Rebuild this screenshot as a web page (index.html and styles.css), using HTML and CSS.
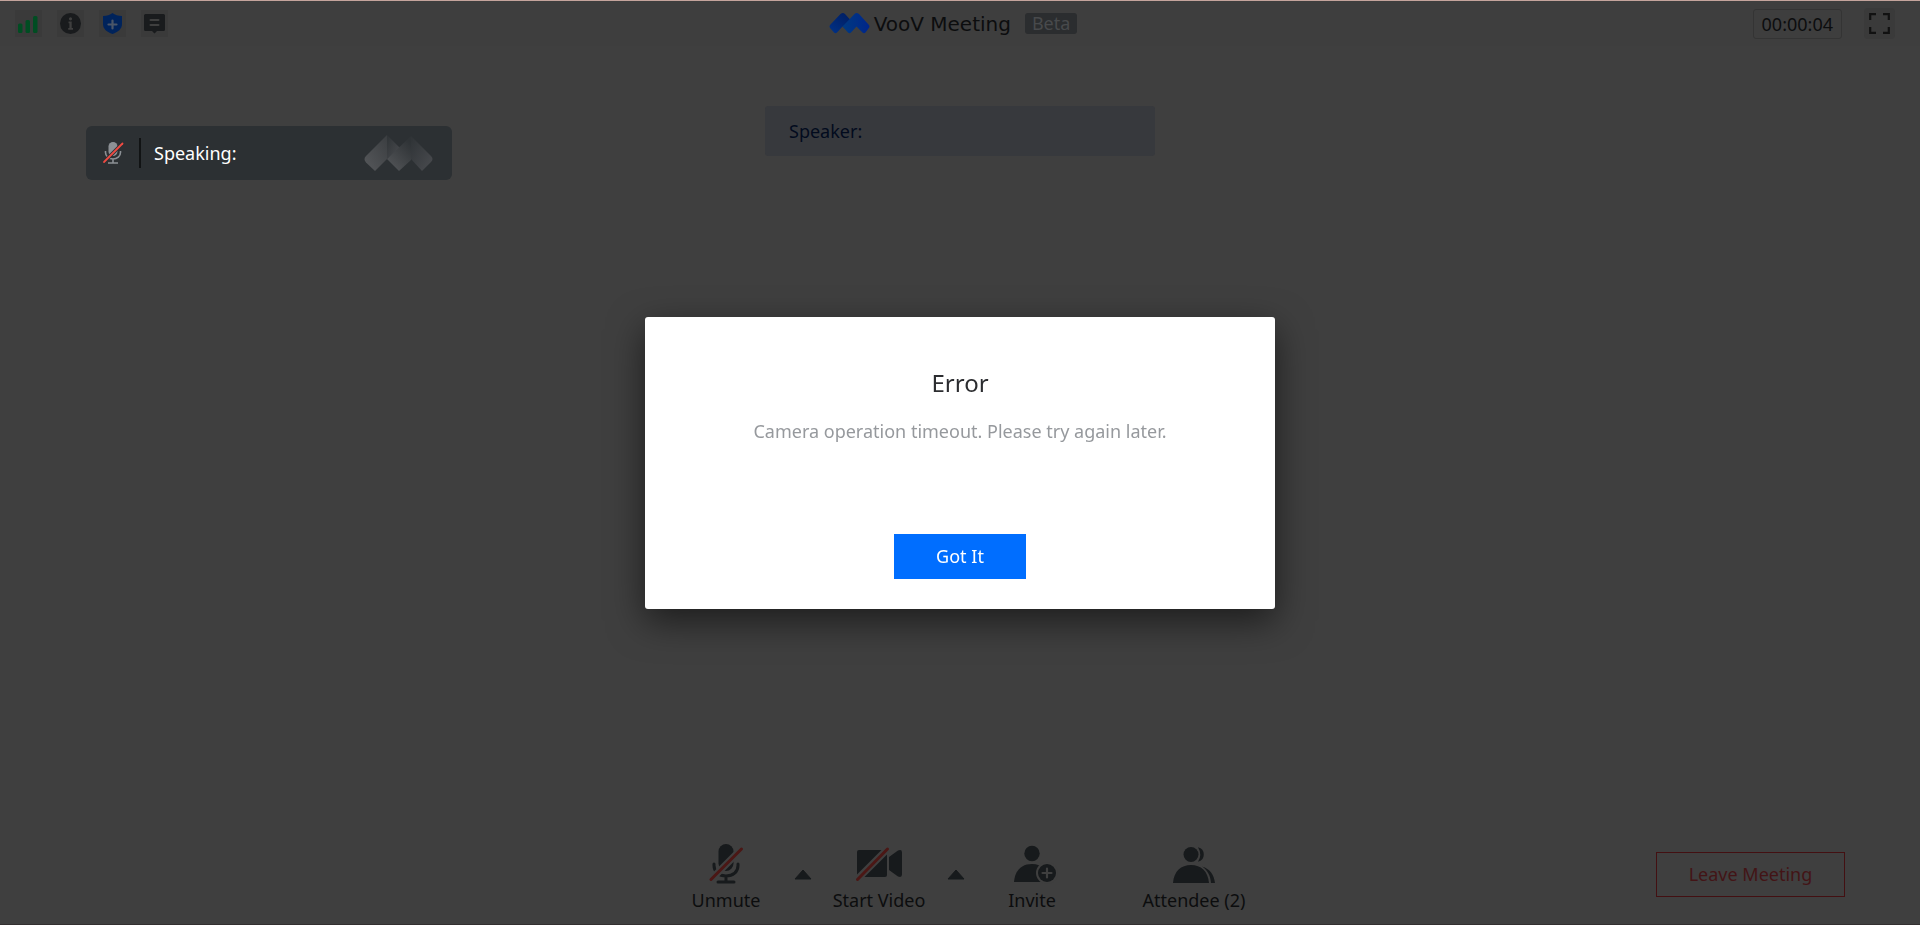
FILE: index.html
```html
<!DOCTYPE html>
<html lang="en">
<head>
<meta charset="utf-8">
<title>VooV Meeting</title>
<link rel="stylesheet" href="styles.css">
</head>
<body>
<div class="app">
  <header class="topbar">
    <div class="tools">
      <button class="tool" aria-label="Network"><svg width="27" height="27" viewBox="0 0 27 27" fill="#004d22"><rect x="3" y="13.500" width="4.500" height="9.500" rx="1.500"/><rect x="10.500" y="10" width="4.500" height="13" rx="1.500"/><rect x="18" y="6" width="4.500" height="17" rx="1.500"/></svg></button>
      <button class="tool" aria-label="Meeting info"><svg width="27" height="27" viewBox="0 0 27 27"><circle cx="13.500" cy="13.500" r="10.500" fill="#191b1d"/><g fill="#3f3f3f"><circle cx="13.500" cy="8.800" r="1.600"/><path d="M11.500 11.500h3.200v6.500h1.300v1.800h-4.800v-1.800h1.200v-4.700h-.9z"/></g></svg></button>
      <button class="tool" aria-label="Security"><svg width="27" height="27" viewBox="0 0 27 27"><path d="M13.500 3 C16 5 19 6 23 6 V14 C23 19 19 22 13.500 24 C8 22 4 19 4 14 V6 C8 6 11 5 13.500 3z" fill="#00235b"/><path d="M13.500 10.500v8M9.500 14.500h8" stroke="#4a5668" stroke-width="2.200" stroke-linecap="round"/></svg></button>
      <button class="tool" aria-label="Chat"><svg width="27" height="27" viewBox="0 0 27 27"><path d="M4.500 4h18a1.500 1.500 0 0 1 1.500 1.500v14a1.500 1.500 0 0 1-1.500 1.500h-6.500l-2.500 2.500-2.500-2.500h-6.500a1.500 1.500 0 0 1-1.500-1.500v-14a1.500 1.500 0 0 1 1.500-1.500z" fill="#191b1d"/><path d="M9.500 10h8M9.500 15h8" stroke="#3f3f3f" stroke-width="2" stroke-linecap="round"/></svg></button>
    </div>
    <div class="brand">
      <svg width="41" height="21" viewBox="0 0 41 21">
        <defs>
          <linearGradient id="a" x1="0" y1="1" x2="1" y2="0"><stop offset="0" stop-color="#003287"/><stop offset="1" stop-color="#001a5c"/></linearGradient>
          <linearGradient id="b" x1="0" y1="0" x2="1" y2="0"><stop offset="0" stop-color="#003a80"/><stop offset="1" stop-color="#00258a"/></linearGradient>
        </defs>
        <path d="M11.500 1q2.500-2 4.500 0L26 12 20.500 19 13.500 13.500 8 19.500q-1.500 1.500-3 0L1.500 15.500Q-.5 13.500 1.500 11.500z" fill="url(#a)"/>
        <path d="M25.500 1q2-2 4.500 0L39.500 11.500Q41.500 13.500 39.500 15.500L36.500 19.500q-1.500 1.500-3 0L27.500 13.500 22 19.500q-1.500 1.500-3 0L13.500 13.500z" fill="url(#b)"/>
      </svg>
      <span class="brand-name">VooV Meeting</span>
      <span class="beta">Beta</span>
    </div>
    <div class="status">
      <time class="timer">00:00:04</time>
      <button class="fullscreen" aria-label="Full screen"><svg width="21" height="21" viewBox="0 0 21 21" fill="none" stroke="#111" stroke-width="2.200"><path d="M1.200 7V1.200H7M14 1.200h5.800V7M19.800 14v5.800H14M7 19.800H1.200V14"/></svg></button>
    </div>
  </header>

  <main class="stage">
    <section class="speaking">
      <svg width="20" height="22" viewBox="0 0 20 22" fill="none"><rect x="5.500" y="0" width="9" height="14" rx="4.500" fill="#8c9095"/><path d="M2.500 9v1.500a7.500 6.500 0 0 0 15 0V9M10 17v3.500M5 21h10" stroke="#8c9095" stroke-width="1.600"/><path d="M1 20 19.500 1.500" stroke="#2c3033" stroke-width="3.800"/><path d="M1 20 19.500 1.500" stroke="#ef4a42" stroke-width="1.800" stroke-linecap="round"/></svg>
      <span class="speaking-label">Speaking:</span>
      <svg width="70" height="36" viewBox="0 0 70 36">
        <defs>
          <linearGradient id="c" x1="0" y1="1" x2="1" y2="0"><stop offset="0" stop-color="#56585b"/><stop offset="1" stop-color="#3b3e41"/></linearGradient>
          <linearGradient id="d" x1="0" y1="1" x2=".7" y2="0"><stop offset="0" stop-color="#56585b"/><stop offset="1" stop-color="#2f3336"/></linearGradient>
          <linearGradient id="e" x1="0" y1="0" x2="1" y2="1"><stop offset="0" stop-color="#2f3336"/><stop offset="1" stop-color="#4a4c50"/></linearGradient>
        </defs>
        <path d="M23 0v24L11 36 2 27.500Q-1 24 2 21z" fill="url(#c)"/>
        <path d="M23 0 36 13 23 24z" fill="url(#e)"/>
        <path d="M47 1v24L35 36 23 24z" fill="url(#d)"/>
        <path d="M47 1 67 21q3 3 0 6l-9 9-11-12z" fill="url(#e)"/>
      </svg>
    </section>
    <section class="speaker">Speaker:</section>
  </main>

  <footer class="controls">
    <div class="actions">
      <button class="action"><svg width="34" height="40" viewBox="0 0 34 40" fill="none"><rect x="9.500" y="0" width="15" height="27" rx="7.500" fill="#171a1c"/><path d="M5 20v1.500c0 6.500 5 10.500 12 10.500s12-4 12-10.500V20M17 32v6M9 38h16" stroke="#171a1c" stroke-width="3" stroke-linecap="round"/><path d="M2 35.500 32.500 5" stroke="#3f3f3f" stroke-width="7"/><path d="M2 35.500 32.500 5" stroke="#4b1715" stroke-width="3" stroke-linecap="round"/></svg><span>Unmute</span></button>
      <button class="arrow" aria-label="Audio options"><svg width="18" height="11" viewBox="0 0 18 11"><path d="M9 1 17 10H1z" fill="#171a1c" stroke="#171a1c" stroke-linejoin="round"/></svg></button>
      <button class="action"><svg width="46" height="40" viewBox="0 0 46 40"><path d="M3 6h26a2 2 0 0 1 2 2v23a2 2 0 0 1-2 2H3a2 2 0 0 1-2-2V8a2 2 0 0 1 2-2zM33 13l9-6.500q4-1.500 4 2v22q0 3.500-4 2L33 26z" fill="#171a1c"/><path d="M1 35.500 31.500 5" stroke="#3f3f3f" stroke-width="7"/><path d="M1.500 35.500 31.500 5" stroke="#4b1715" stroke-width="3" stroke-linecap="round"/></svg><span>Start Video</span></button>
      <button class="arrow" aria-label="Video options"><svg width="18" height="11" viewBox="0 0 18 11"><path d="M9 1 17 10H1z" fill="#171a1c" stroke="#171a1c" stroke-linejoin="round"/></svg></button>
      <button class="action"><svg width="36" height="40" viewBox="0 0 36 40"><circle cx="18" cy="9.500" r="7.700" fill="#171a1c"/><path d="M0 38C1 26 8 20 18 20s17 6 18 18z" fill="#171a1c"/><circle cx="33" cy="29" r="11" fill="#3f3f3f"/><circle cx="33" cy="29" r="9" fill="#171a1c"/><path d="M33 24.500v9M28.500 29h9" stroke="#3f3f3f" stroke-width="2.200" stroke-linecap="round"/></svg><span>Invite</span></button>
      <button class="action attendee"><svg width="42" height="40" viewBox="0 0 42 40" fill="#171a1c"><circle cx="18" cy="10.500" r="7.500"/><path d="M25 3.200a7.500 7.500 0 0 1 0 14.600q4.500-7.300 0-14.600zM0 39C1 27 8 21 18 21s17 6 18 18zM29 22.500c8 2.500 12 8 13 16.500h-4c-.5-7-3-12.500-9-16.500z"/></svg><span>Attendee (2)</span></button>
    </div>
    <button class="leave">Leave Meeting</button>
  </footer>
</div>

<div class="overlay">
  <div class="dialog" role="alertdialog" aria-modal="true" aria-labelledby="dialog-title" aria-describedby="dialog-text">
    <h1 class="dialog-title" id="dialog-title">Error</h1>
    <p class="dialog-text" id="dialog-text">Camera operation timeout. Please try again later.</p>
    <button class="confirm">Got It</button>
  </div>
</div>
</body>
</html>
```
FILE: styles.css
```css
* { box-sizing: border-box; }

body {
  margin: 0;
  background: #3f3f3f;
  color: #0c0d0e;
  font-family: "Noto Sans", "Open Sans", sans-serif;
  font-size: 18px;
  line-height: 24px;
}

button {
  margin: 0;
  padding: 0;
  border: 0;
  background: none;
  color: inherit;
  font: inherit;
}

svg { display: block; flex: none; overflow: visible; }

.app {
  display: flex;
  flex-direction: column;
  min-height: 100vh;
  border-top: 1px solid #c4a49c;
  border-bottom: 1px solid #332f30;
}

.topbar {
  display: grid;
  grid-template-columns: 1fr auto 1fr;
  align-items: center;
  height: 45px;
  padding: 0 25px 0 15px;
  background: #3e3e3e;
}

.tools { display: flex; gap: 15px; }
.tool { background: #3a3a3a; }

.brand { display: flex; align-items: center; padding-right: 4px; }
.brand-name {
  margin-left: 4px;
  font-family: "DejaVu Sans", sans-serif;
  font-size: 20px;
}
.beta {
  margin-left: 14px;
  padding: 0 7px;
  border-radius: 3px;
  background: #2b2d2f;
  color: #484a4c;
  line-height: 21px;
}

.status { display: flex; justify-content: flex-end; align-items: center; gap: 22px; }
.timer {
  padding: 2px 8px;
  border: 1px solid #343434;
  border-radius: 3px;
}
.fullscreen {
  padding: 5px;
  border-radius: 4px;
  background: #3a3a3a;
}

.stage {
  display: grid;
  grid-template-columns: 1fr 390px 1fr;
  align-items: start;
  flex: 1;
  padding: 60px 86px 0;
}

.speaking {
  display: flex;
  align-items: center;
  width: 366px;
  height: 54px;
  margin-top: 20px;
  padding: 0 18px 0 17px;
  border-radius: 6px;
  background: #2c3033;
  color: #fff;
}
.speaking-label {
  flex: 1;
  margin-left: 16px;
  padding: 3px 0 3px 13px;
  border-left: 2px solid #111314;
}

.speaker {
  padding: 13px 24px;
  border-radius: 3px;
  background: #37393d;
  color: #020b1e;
}

.controls {
  display: grid;
  grid-template-columns: 1fr auto 1fr;
  align-items: center;
  padding: 0 75px 12px;
}
.actions { display: flex; grid-column: 2; align-items: center; }
.action {
  display: flex;
  flex-direction: column;
  align-items: center;
  gap: 4px;
  width: 135px;
}
.attendee { margin-left: 27px; }
.arrow { padding-bottom: 8px; }
.leave {
  justify-self: end;
  width: 189px;
  height: 45px;
  margin-bottom: 8px;
  border: 1px solid #431012;
  color: #431416;
}

.overlay {
  position: fixed;
  inset: 0;
  display: flex;
  align-items: center;
  justify-content: center;
}
.dialog {
  display: flex;
  flex-direction: column;
  align-items: center;
  width: 630px;
  padding: 48px 30px 30px;
  border-radius: 3px;
  background: #fff;
  box-shadow: 0 12px 36px rgba(0, 0, 0, .55);
  text-align: center;
}
.dialog-title {
  margin: 0;
  color: #2c2d30;
  font-size: 24px;
  font-weight: 400;
  line-height: 36px;
}
.dialog-text {
  margin: 18px 0 91px;
  color: #96999d;
}
.confirm {
  width: 132px;
  height: 45px;
  background: #006eff;
  color: #fff;
}
```
